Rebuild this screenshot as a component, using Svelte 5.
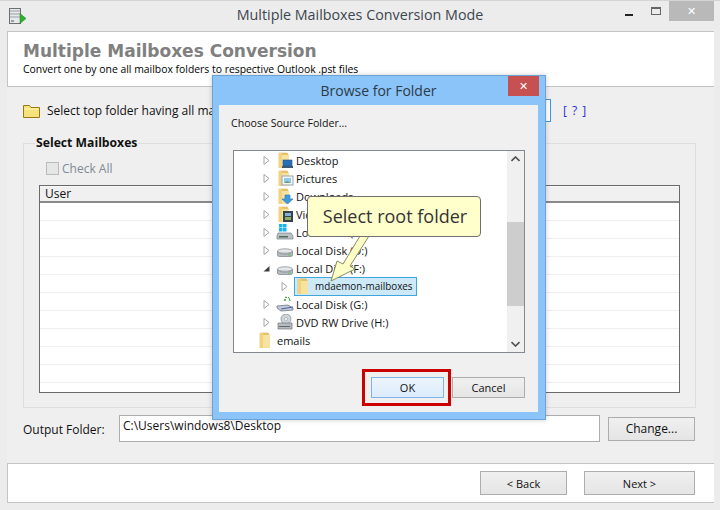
<script>
  const rows = [
    { label: "Desktop", icon: "desktop", arrow: "closed", depth: 1 },
    { label: "Pictures", icon: "pictures", arrow: "closed", depth: 1 },
    { label: "Downloads", icon: "downloads", arrow: "closed", depth: 1 },
    { label: "Videos", icon: "videos", arrow: "closed", depth: 1 },
    { label: "Local Disk (C:)", icon: "system", arrow: "closed", depth: 1 },
    { label: "Local Disk (D:)", icon: "disk", arrow: "closed", depth: 1 },
    { label: "Local Disk (F:)", icon: "disk", arrow: "open", depth: 1 },
    { label: "mdaemon-mailboxes", icon: "folder", arrow: "closed", depth: 2, selected: true },
    { label: "Local Disk (G:)", icon: "net", arrow: "closed", depth: 1 },
    { label: "DVD RW Drive (H:)", icon: "dvd", arrow: "closed", depth: 1 },
    { label: "emails", icon: "folder", arrow: "none", depth: 0 }
  ];
  const tableRows = Array(10).fill(0);
</script>

{#snippet folderBase()}
  <path d="M3 1h8l1 1v14H3z" fill="#e8c468" stroke="#d9b25a" stroke-width=".6" />
  <path d="M5 3h8v13H5z" fill="#f7e3a0" />
  <path d="M3 1h3v15H3z" fill="#f3d27c" />
{/snippet}

{#snippet treeIcon(kind)}
  <svg class="ticon" width="18" height="16" viewBox="0 0 18 16">
    {#if kind === "folder" || kind === "desktop" || kind === "pictures" || kind === "downloads" || kind === "videos"}
      {@render folderBase()}
    {/if}
    {#if kind === "desktop"}
      <rect x="7" y="8" width="9" height="6" fill="#2a6fb5" stroke="#24507c" stroke-width=".6" />
      <rect x="6" y="14" width="11" height="2" fill="#3a5a78" />
    {:else if kind === "pictures"}
      <rect x="6" y="6" width="11" height="9" fill="#f4f6f8" stroke="#9aa4ae" />
      <rect x="8" y="8" width="7" height="5" fill="#8ecbe6" />
      <path d="M8 13l3-2 4 2z" fill="#6a9a7a" />
    {:else if kind === "downloads"}
      <path d="M9 7h5v4h3l-5.500 5L6 11h3z" fill="#3f9be0" stroke="#2a6fb5" stroke-width=".6" />
    {:else if kind === "videos"}
      <rect x="7" y="5" width="10" height="11" fill="#39424c" />
      <rect x="9" y="7" width="6" height="3" fill="#7fb2d6" />
      <rect x="9" y="11" width="6" height="3" fill="#8fae6a" />
    {:else if kind === "system"}
      <rect x="3" y="0" width="3.500" height="3.500" fill="#19b4f0" />
      <rect x="7" y="0" width="3.500" height="3.500" fill="#19b4f0" />
      <rect x="3" y="4" width="3.500" height="3.500" fill="#19b4f0" />
      <rect x="7" y="4" width="3.500" height="3.500" fill="#19b4f0" />
      <path d="M2 9h13l2 3v3H1v-3z" fill="#b9c0c6" stroke="#7a8288" stroke-width=".7" />
      <rect x="3" y="12" width="9" height="1.500" fill="#4f6a55" />
    {:else if kind === "disk"}
      <ellipse cx="9" cy="9" rx="7.500" ry="2.200" fill="#e4e7e9" stroke="#8d9499" stroke-width=".8" />
      <path d="M1.500 9.500v3.500q0 1.500 2 1.500h11q2 0 2-1.500V9.500q-1 2.500-7.500 2.500T1.500 9.500z" fill="#b6bcc1" stroke="#7a8288" stroke-width=".7" />
      <rect x="12" y="12.500" width="3" height="1" fill="#5ec15e" />
    {:else if kind === "net"}
      <path d="M9 1.500a2 2 0 0 1 2 0M12 1a5 5 0 0 1 2 4" fill="none" stroke="#2aa02a" />
      <circle cx="9" cy="4" r="1" fill="#2aa02a" />
      <path d="M1 10l11-1 5 3v2l-12 1-4-3z" fill="#c3cad8" stroke="#6a7488" stroke-width=".8" />
      <path d="M5 13l12-2" stroke="#4a5aa0" />
    {:else if kind === "dvd"}
      <circle cx="10" cy="5" r="5" fill="#cfd6da" stroke="#7f878c" stroke-width=".7" />
      <circle cx="10" cy="5" r="1.500" fill="#fff" stroke="#7f878c" stroke-width=".5" />
      <path d="M2 9h14v6H2z" fill="#b6bcc1" stroke="#6d7479" stroke-width=".7" />
      <rect x="3" y="12" width="11" height="1" fill="#666" />
    {/if}
  </svg>
{/snippet}

<div class="window">
  <header class="titlebar">
    <svg class="app-icon" width="18" height="18" viewBox="0 0 18 18">
      <rect x="1.500" y="1.500" width="11" height="15" fill="#e6e8ea" stroke="#6c7074" />
      <path d="M2 4h10M2 7h10M2 10h10" stroke="#9aa0a5" />
      <path d="M3 14h3" stroke="#555" />
      <path d="M12 6.500l6 5-6 5z" fill="#2fb12f" stroke="#1b7a1b" stroke-width=".5" />
    </svg>
    <span class="title">Multiple Mailboxes Conversion Mode</span>
    <div class="win-controls">
      <span class="min"></span>
      <span class="max"></span>
      <span class="close">✕</span>
    </div>
  </header>

  <section class="banner">
    <h1>Multiple Mailboxes Conversion</h1>
    <p>Convert one by one all mailbox folders to respective Outlook .pst files</p>
  </section>

  <main class="content">
    <div class="source-row">
      <svg width="17" height="14" viewBox="0 0 17 14">
        <path d="M.5 13.500V1.500h6l1.500 2h8.500v10z" fill="#f5e27a" stroke="#9a7a10" />
        <path d="M1.500 5h14" stroke="#fff6b8" />
      </svg>
      <span class="source-label">Select top folder having all mailboxes</span>
      <div class="source-input"></div>
      <a class="help">[ ? ]</a>
    </div>

    <fieldset class="group">
      <legend>Select Mailboxes</legend>
      <label class="check-all"><span class="box"></span>Check All</label>
      <div class="table">
        <div class="thead">User</div>
        {#each tableRows as _}
          <div class="trow"></div>
        {/each}
      </div>
    </fieldset>

    <div class="output-row">
      <span class="output-label">Output Folder:</span>
      <div class="output-input">C:\Users\windows8\Desktop</div>
      <button class="btn change">Change...</button>
    </div>
  </main>

  <footer class="footer">
    <button class="btn back">&lt; Back</button>
    <button class="btn next">Next &gt;</button>
  </footer>

  <div class="dialog">
    <div class="dialog-title">
      <span>Browse for Folder</span>
      <span class="dialog-close">✕</span>
    </div>
    <div class="dialog-body">
      <p class="choose">Choose Source Folder...</p>
      <div class="tree">
        <div class="tree-list">
          {#each rows as row}
            <div class="tree-row depth-{row.depth}">
              {#if row.arrow === "closed"}
                <svg class="arrow" width="7" height="9" viewBox="0 0 7 9"><path d="M1 .5l5 4-5 4z" fill="#fff" stroke="#a6a6a6" /></svg>
              {:else if row.arrow === "open"}
                <svg class="arrow" width="7" height="9" viewBox="0 0 7 9"><path d="M6.500 2v5.500H.5z" fill="#404040" /></svg>
              {/if}
              <div class="tree-item" class:selected={row.selected}>
                {@render treeIcon(row.icon)}
                <span>{row.label}</span>
              </div>
            </div>
          {/each}
        </div>
        <div class="scrollbar">
          <svg width="9" height="6" viewBox="0 0 9 6"><path d="M.5 5L4.500 1l4 4" fill="none" stroke="#505050" stroke-width="1.600" /></svg>
          <div class="track"><div class="thumb"></div></div>
          <svg width="9" height="6" viewBox="0 0 9 6"><path d="M.5 1l4 4 4-4" fill="none" stroke="#505050" stroke-width="1.600" /></svg>
        </div>
      </div>
      <div class="dialog-actions">
        <div class="ok-mark"><button class="btn ok">OK</button></div>
        <button class="btn cancel">Cancel</button>
      </div>
    </div>
  </div>

  <svg class="pointer" width="60" height="50" viewBox="0 0 60 50">
    <path d="M39 0h9L29 30l5 3-24 12 6-20 6 3z" fill="#ffffc8" stroke="#8a8a60" stroke-width="1" />
  </svg>
  <div class="callout">Select root folder</div>
</div>

<style>
  :global(body) {
    margin: 0;
    background: #ececec;
  }

  .window {
    position: relative;
    width: 720px;
    height: 510px;
    box-sizing: border-box;
    display: flex;
    flex-direction: column;
    background: #ececec;
    border-top: 1px solid #d4d4d4;
    font: 12px "Open Sans", "Noto Sans", sans-serif;
    color: #111;
    overflow: hidden;
  }

  .titlebar {
    height: 30px;
    flex: none;
    display: flex;
    align-items: center;
    justify-content: center;
    position: relative;
  }
  .app-icon {
    position: absolute;
    left: 8px;
    top: 6px;
  }
  .title {
    font-size: 14.300px;
    color: #3c4650;
    margin-top: -3px;
  }
  .win-controls {
    position: absolute;
    right: 6px;
    top: 0;
    display: flex;
    align-items: flex-start;
  }
  .min {
    width: 8px;
    height: 2px;
    background: #222;
    margin: 13px 18px 0 0;
  }
  .max {
    width: 8px;
    height: 5px;
    border: 1px solid #666;
    border-top-width: 2px;
    margin: 6px 8px 0 0;
  }
  .close {
    width: 45px;
    height: 20px;
    background: #b9b9b9;
    color: #fff;
    font-size: 11px;
    line-height: 20px;
    text-align: center;
  }

  .banner {
    flex: none;
    height: 56px;
    margin: 0 6px 0 7px;
    box-sizing: border-box;
    background: #fff;
    border-top: 1px solid #c4c4c4;
    border-left: 1px solid #c4c4c4;
    border-bottom: 1px solid #c4c4c4;
    padding: 7px 0 0 15px;
  }
  .banner h1 {
    margin: 0;
    font: bold 17px/24px "DejaVu Sans", sans-serif;
    color: #808080;
  }
  .banner p {
    margin: -1px 0 0;
    font-size: 10.400px;
    line-height: 14px;
    color: #000;
  }

  .content {
    flex: 1;
    background: #efefef;
    margin: 0 6px 0 7px;
    padding: 12px 18px 0 16px;
    display: flex;
    flex-direction: column;
    min-height: 0;
  }

  .source-row {
    display: flex;
    align-items: center;
    height: 23px;
  }
  .source-label {
    margin-left: 7px;
    width: 300px;
    white-space: nowrap;
  }
  .source-input {
    flex: none;
    width: 195px;
    height: 21px;
    margin-left: 7px;
    background: #fff;
    border: 1px solid #3a96dd;
  }
  .help {
    margin-left: 12px;
    color: #2a2ad8;
    letter-spacing: 1px;
  }

  .group {
    margin: 12px 0 0 0;
    padding: 0 15px;
    height: 274px;
    box-sizing: border-box;
    border: 1px solid #dedede;
  }
  .group legend {
    margin-left: -4px;
    padding: 0 1px;
    font-weight: 700;
    font-size: 12.200px;
    line-height: 18px;
  }
  .check-all {
    display: flex;
    align-items: center;
    gap: 3px;
    margin: 7px 0 0 7px;
    height: 18px;
    color: #808a94;
  }
  .box {
    width: 11px;
    height: 11px;
    background: #e6e6e6;
    border: 1px solid #bbb;
  }
  .table {
    margin-top: 8px;
    height: 208px;
    box-sizing: border-box;
    background: #fff;
    border: 1px solid #6a6a6a;
    overflow: hidden;
  }
  .thead {
    height: 14px;
    line-height: 14px;
    padding-left: 5px;
    background: #f0f0f0;
    border-top: 1px solid #f8f8f8;
    border-bottom: 2px solid #8a8a8a;
  }
  .trow {
    height: 17px;
    border-bottom: 1px solid #efefef;
  }

  .output-row {
    display: flex;
    align-items: center;
    margin-top: 7px;
    height: 27px;
  }
  .output-label {
    width: 96px;
    flex: none;
    padding-top: 2px;
  }
  .output-input {
    width: 481px;
    height: 27px;
    box-sizing: border-box;
    padding: 1px 3px;
    background: #fff;
    border: 1px solid #adadad;
    line-height: 17px;
  }

  .btn {
    box-sizing: border-box;
    height: 24px;
    padding: 0;
    font: 11px "Open Sans", "Noto Sans", sans-serif;
    color: #111;
    border: 1px solid #adadad;
    background: linear-gradient(#f0f0f0, #e5e5e5);
  }
  .change {
    width: 87px;
    margin-left: 8px;
    font-size: 12px;
  }

  .footer {
    flex: none;
    height: 40px;
    margin: 0 6px 7px 7px;
    box-sizing: border-box;
    background: #fff;
    border: 1px solid #c4c4c4;
    border-right: none;
    display: flex;
    justify-content: flex-end;
    align-items: center;
    gap: 17px;
    padding-right: 19px;
  }
  .back {
    width: 87px;
  }
  .next {
    width: 111px;
  }

  .dialog {
    position: absolute;
    left: 212px;
    top: 74px;
    width: 334px;
    height: 345px;
    box-sizing: border-box;
    background: #8bc4f8;
    border: 1px solid #6ca2d4;
    box-shadow: 0 0 5px rgba(0, 0, 0, .2);
    display: flex;
    flex-direction: column;
    padding: 0 7px 7px 6px;
  }
  .dialog-title {
    height: 29px;
    flex: none;
    display: flex;
    align-items: center;
    justify-content: center;
    font-size: 14px;
    color: #2c3a48;
    position: relative;
  }
  .dialog-close {
    position: absolute;
    right: -1px;
    top: 0;
    width: 31px;
    height: 20px;
    background: #c75050;
    color: #fff;
    font-size: 11px;
    line-height: 20px;
    text-align: center;
  }
  .dialog-body {
    flex: 1;
    background: #f0f0f0;
    padding: 0 13px 0 12px;
    display: flex;
    flex-direction: column;
  }
  .choose {
    margin: 10px 0 0;
    font-size: 10.600px;
    line-height: 16px;
  }
  .tree {
    margin: 19px 0 0 2px;
    height: 203px;
    box-sizing: border-box;
    background: #fff;
    border: 1px solid #828790;
    display: flex;
    overflow: hidden;
  }
  .tree-list {
    flex: 1;
    overflow: hidden;
  }
  .tree-row {
    display: flex;
    align-items: center;
    height: 18px;
    position: relative;
  }
  .tree-row.depth-0 { padding-left: 23px; }
  .tree-row.depth-1 { padding-left: 42px; }
  .tree-row.depth-2 { padding-left: 60px; }
  .arrow {
    position: absolute;
    margin-left: -13px;
  }
  .tree-item {
    display: flex;
    align-items: center;
    gap: 2px;
    height: 18px;
    box-sizing: border-box;
    white-space: nowrap;
    font-size: 11px;
  }
  .ticon {
    flex: none;
  }
  .tree-item.selected {
    background: #cde8f7;
    border: 1px solid #3fa5dc;
    height: 19px;
    gap: 2px;
    padding-right: 3px;
    font-size: 9.900px;
  }
  .scrollbar {
    width: 17px;
    flex: none;
    background: #f0f0f0;
    display: flex;
    flex-direction: column;
    align-items: center;
    padding: 5px 0;
    box-sizing: border-box;
    justify-content: space-between;
  }
  .track {
    flex: 1;
    width: 100%;
    padding-top: 60px;
    padding-bottom: 35px;
    box-sizing: border-box;
    display: flex;
  }
  .thumb {
    flex: 1;
    background: #cdcdcd;
  }
  .dialog-actions {
    display: flex;
    justify-content: flex-end;
    align-items: center;
    margin-top: 16px;
    gap: 1px;
  }
  .ok-mark {
    border: 3px solid #cc0000;
    padding: 5px 4px 5px 6px;
    display: flex;
  }
  .ok {
    width: 73px;
    height: 21px;
    background: linear-gradient(#ecf4fc, #dcecfc);
    border-color: #7eb4ea;
  }
  .cancel {
    width: 73px;
    height: 21px;
  }

  .callout {
    position: absolute;
    left: 307px;
    top: 195px;
    width: 174px;
    height: 41px;
    box-sizing: border-box;
    padding-left: 2px;
    background: #ffffcc;
    border: 1px solid #707070;
    border-radius: 4px;
    font-size: 18px;
    line-height: 38px;
    text-align: center;
    color: #333;
  }
  .pointer {
    position: absolute;
    left: 321px;
    top: 235px;
  }
</style>
